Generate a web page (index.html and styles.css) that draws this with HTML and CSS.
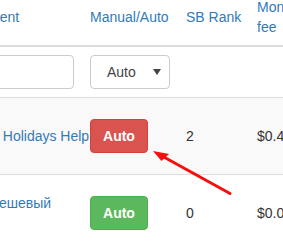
FILE: index.html
```html
<!DOCTYPE html>
<html>
<head>
    <meta charset="UTF-8">
    <title>Campaigns</title>
    <link rel="stylesheet" href="styles.css">
</head>
<body>

    <table class="grid">
        <thead>
            <tr>
                <th class="col-name"><a href="#">Department</a></th>
                <th class="col-mode"><a href="#">Manual/Auto</a></th>
                <th class="col-rank"><a href="#">SB Rank</a></th>
                <th class="col-fee"><a href="#">Monthly fee</a></th>
                <th class="col-more"><a href="#">Status</a></th>
            </tr>
        </thead>
        <tbody>
            <tr class="filter-row">
                <td><input type="text" class="form-input"></td>
                <td>
                    <div class="form-select">
                        <span>Auto</span>
                        <span class="caret"></span>
                    </div>
                </td>
                <td></td>
                <td></td>
                <td></td>
            </tr>
            <tr class="data-row striped">
                <td><a href="#">Summer Holidays Help</a></td>
                <td><button class="btn btn-danger">Auto</button></td>
                <td>2</td>
                <td>$0.45</td>
                <td></td>
            </tr>
            <tr class="data-row">
                <td><a href="#">Очень дешевый<br>тур</a></td>
                <td><button class="btn btn-success">Auto</button></td>
                <td>0</td>
                <td>$0.00</td>
                <td></td>
            </tr>
        </tbody>
    </table>

    <!-- annotation arrow -->
    <svg class="pointer" width="283" height="249" viewBox="0 0 283 249">
        <line x1="230" y1="193.5" x2="162" y2="156" stroke="#f50f0f" stroke-width="3" stroke-linecap="round"/>
        <polygon points="153,151 169,154 161.5,161" fill="#f50f0f"/>
    </svg>

</body>
</html>
```

FILE: styles.css
```css
* {
    box-sizing: border-box;
}

body {
    margin: 0;
    overflow: hidden;
    font-family: "Liberation Sans", Arial, Helvetica, sans-serif;
    font-size: 14px;
    line-height: 20px;
    color: #333;
    background-color: #fff;
}

a {
    color: #337ab7;
    text-decoration: none;
}

.grid {
    border-collapse: separate;
    border-spacing: 0;
    table-layout: fixed;
    width: 440px;
    margin: -11px 0 0 -62px;
}

.grid th,
.grid td {
    padding: 8px;
    text-align: left;
    vertical-align: middle;
}

.grid th {
    font-weight: normal;
    white-space: nowrap;
    border-bottom: 2px solid #ddd;
}

.grid th.col-fee {
    white-space: normal;
}

.col-name { width: 144px; }
.col-mode { width: 96px; }
.col-rank { width: 71px; }
.col-fee  { width: 56px; }
.col-more { width: 73px; }

.grid td:first-child {
    white-space: nowrap;
}

.data-row td {
    border-top: 1px solid #ddd;
    height: 77px;
}

.striped td {
    background-color: #f9f9f9;
}

.form-input {
    display: block;
    width: 100%;
    height: 34px;
    border: 1px solid #ccc;
    border-radius: 4px;
    font: inherit;
}

.form-select {
    display: flex;
    align-items: center;
    justify-content: space-between;
    width: 80px;
    height: 34px;
    padding: 0 8px 0 16px;
    border: 1px solid #ccc;
    border-radius: 4px;
    color: #444;
    background-color: #fff;
}

.caret {
    width: 0;
    height: 0;
    border-left: 4px solid transparent;
    border-right: 4px solid transparent;
    border-top: 6px solid #444;
}

.btn {
    display: inline-block;
    width: 58px;
    height: 34px;
    padding: 6px 0;
    font-family: inherit;
    font-size: 14px;
    font-weight: bold;
    line-height: 20px;
    color: #fff;
    border: 1px solid transparent;
    border-radius: 4px;
    text-align: center;
}

.btn-danger {
    background-color: #d9534f;
    border-color: #d43f3a;
}

.btn-success {
    background-color: #5cb85c;
    border-color: #4cae4c;
}

.pointer {
    position: absolute;
    top: 0;
    left: 0;
    pointer-events: none;
}
```
